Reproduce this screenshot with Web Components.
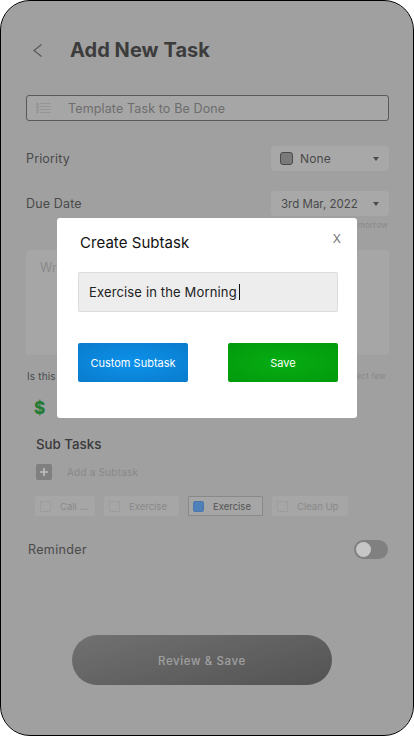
<!DOCTYPE html>
<html lang="en"><head><meta charset="utf-8"><title>Add New Task</title>
<style>
html,body{margin:0;padding:0;background:#fff}
body{font-family:Inter,"Noto Sans",sans-serif;width:414px;height:736px;overflow:hidden}
</style></head>
<body>
<phone-frame>
  <task-form></task-form>
  <subtask-dialog slot="overlay"></subtask-dialog>
</phone-frame>
<script>
function def(name, html){
  customElements.define(name, class extends HTMLElement{
    constructor(){super();this.attachShadow({mode:'open'}).innerHTML=html(this);}
  });
}
def('phone-frame',()=>`<style>
:host{display:block;width:414px;height:736px;box-sizing:border-box;border:1px solid #000;border-radius:30px;overflow:hidden;position:relative;background:#c8c8c8}
.ov{position:absolute;inset:0;background:rgba(0,0,0,.2);display:flex;align-items:flex-start;justify-content:center}
</style><slot></slot><div class="ov"><slot name="overlay"></slot></div>`);

def('select-box',()=>`<style>
:host{display:flex;align-items:center;width:118px;height:25px;box-sizing:border-box;background:#d2d2d2;border-radius:4px;font-size:12px;letter-spacing:.15px;color:#5d5d5d;padding:0 10px 0 9px;gap:7px}
.grow{flex:1;white-space:nowrap}
.arrow{width:0;height:0;border-left:3px solid transparent;border-right:3px solid transparent;border-top:4px solid #5d5d5d}
</style><slot name="icon"></slot><span class="grow"><slot></slot></span><span class="arrow"></span>`);

def('sub-chip',()=>`<style>
:host{display:flex;align-items:center;box-sizing:border-box;height:20px;background:#d0d0d0;border-radius:2px;padding:0 0 0 5px;font-size:9.5px;color:#acacac;white-space:nowrap}
:host([on]){border:1px solid #acacac;color:#6a6a6a;border-radius:1px;padding-left:4px}
.b{width:9px;height:9px;border:1px solid #c4c4c4;border-radius:1px;flex:none;margin-right:9px}
:host([on]) .b{background:#64a0e6;border-color:#5c94d8;border-radius:2px}
</style><span class="b"></span><slot></slot>`);

def('task-form',()=>`<style>
:host{display:flex;flex-direction:column;height:100%;box-sizing:border-box;padding:36px 24px 50px 25px;color:#5d5d5d;font-size:12px}
.head{display:flex;align-items:center;height:27px;padding-left:7px;gap:28px}
h1{margin:0;font-size:20px;font-weight:700;color:#4b4b4b;letter-spacing:.05px;line-height:27px}
.title{margin-top:31px;height:26px;box-sizing:border-box;border:1px solid #707070;border-radius:3px;display:flex;align-items:center;padding-left:9px;gap:17px;color:#898989;font-size:12.5px;letter-spacing:.13px;background:#d0d0d0}
.row{display:flex;justify-content:space-between;align-items:center;height:25px}
.lab{font-size:12.5px;letter-spacing:.15px}
.pri{margin-top:25px}.due{margin-top:20px}
.swatch{width:11px;height:11px;border:1px solid #5d5d5d;border-radius:3px;background:#999;flex:none}
.date{display:block;font-size:11.5px;letter-spacing:0;padding-left:1px}
.hint{height:34px;box-sizing:border-box;padding:4px 1px 0 0;text-align:right;font-size:8px;color:#acacac;letter-spacing:.2px}
.area{height:105px;background:#d0d0d0;border-radius:3px;box-sizing:border-box;padding:10px 14px;font-size:12.5px;color:#acacac;letter-spacing:.2px}
.isthis{display:flex;justify-content:space-between;align-items:center;margin-top:14px;height:14px;font-size:10px;padding:0 3px 0 1px;letter-spacing:.15px}
.few{font-size:8px;color:#acacac;letter-spacing:.2px}
.dollar{margin:14px 0 0 8px;height:22px;font-size:17px;font-weight:800;color:#2e9a40;line-height:22px}
.subs{margin-top:16px;padding-left:10px}
h2{margin:0;font-size:13.3px;font-weight:500;color:#494949;line-height:18px}
.add{display:flex;align-items:center;gap:15px;margin-top:11px;height:16px;color:#acacac;font-size:10px;letter-spacing:.2px}
.plus{width:16px;height:16px;border-radius:2px;background:#a0a0a0;display:flex;align-items:center;justify-content:center}
.chips{display:flex;gap:9px;margin:16px 0 0 -1px}
.rem{margin-top:21px;height:24px;padding-left:2px}
.rem .lab{letter-spacing:.35px}
.tg{width:34px;height:19px;border-radius:10px;background:#a0a0a0;display:flex;align-items:center;padding-left:2px;box-sizing:border-box;margin-right:1px}
.tg i{display:block;width:15px;height:15px;border-radius:50%;background:#f8f8f8}
.spacer{flex:1}
.cta{align-self:center;margin-right:11px;width:260px;height:50px;border-radius:25px;background:linear-gradient(165deg,#8e8e8e,#686868);color:#c8c8c8;font-size:11.5px;font-weight:500;display:flex;align-items:center;justify-content:center;letter-spacing:.6px;padding-top:2px;box-sizing:border-box}
</style>
<div class="head">
  <svg width="9" height="13" viewBox="0 0 9 13" fill="none" stroke="#707070" stroke-width="1.2"><path d="M8.5 .5 1 6.5l7.5 6"/></svg>
  <h1>Add New Task</h1>
</div>
<div class="title">
  <svg width="15" height="10" viewBox="0 0 15 10" fill="none" stroke="#bcbcbc" stroke-width="1"><path d="M1.5 0v10" stroke-width="3" stroke-dasharray="2.2 .6"/><path d="M4 .5h11M4 3.5h11M4 6.5h11M4 9.5h11"/></svg>
  <span>Template Task to Be Done</span>
</div>
<div class="row pri"><span class="lab">Priority</span><select-box><span class="swatch" slot="icon"></span>None</select-box></div>
<div class="row due"><span class="lab">Due Date</span><select-box><span class="date">3rd Mar, 2022</span></select-box></div>
<div class="hint">Due tomorrow</div>
<div class="area">Write a description</div>
<div class="isthis"><span>Is this a paid task</span><span class="few">Select few</span></div>
<div class="dollar">$</div>
<div class="subs">
  <h2>Sub Tasks</h2>
  <div class="add"><span class="plus"><svg width="8" height="8" viewBox="0 0 8 8" stroke="#f0f0f0" stroke-width="1.6"><path d="M4 0v8M0 4h8"/></svg></span>Add a Subtask</div>
  <div class="chips">
    <sub-chip style="width:60px">Call ...</sub-chip>
    <sub-chip style="width:75px">Exercise</sub-chip>
    <sub-chip style="width:75px" on>Exercise</sub-chip>
    <sub-chip style="width:76px">Clean Up</sub-chip>
  </div>
</div>
<div class="row rem"><span class="lab">Reminder</span><span class="tg"><i></i></span></div>
<div class="spacer"></div>
<div class="cta">Review &amp; Save</div>`);

def('subtask-dialog',()=>`<style>
:host{display:block;width:300px;height:200px;margin-top:217px;box-sizing:border-box;background:#fff;border-radius:3px;padding:15px 19px 0 21px;position:relative;color:#111}
.top{display:flex;justify-content:space-between;align-items:flex-start;padding-left:2px;height:39px}
.t{font-size:15px;line-height:20px;font-weight:400;letter-spacing:.05px}
.x{font-size:12px;color:#777;line-height:12px;margin:0 -3px 0 0}
.field{height:40px;box-sizing:border-box;background:#ededed;border:1px solid #dcdcdc;border-radius:2px;display:flex;align-items:center;padding-left:10px;font-size:13px;letter-spacing:.15px;color:#222}
.caret{width:1px;height:16px;background:#111;margin-left:2px}
.btns{display:flex;justify-content:space-between;margin-top:31px}
.b{width:110px;height:39px;border-radius:2px;color:#fff;font-size:11px;display:flex;align-items:center;justify-content:center}
.blue{background:radial-gradient(ellipse at center,#0c92ea,#0a7bcc)}
.green{background:radial-gradient(ellipse at center,#07ad12,#029a0c)}
</style>
<div class="top"><span class="t">Create Subtask</span><span class="x">X</span></div>
<div class="field">Exercise in the Morning<span class="caret"></span></div>
<div class="btns"><div class="b blue">Custom Subtask</div><div class="b green">Save</div></div>`);
</script>
</body></html>
